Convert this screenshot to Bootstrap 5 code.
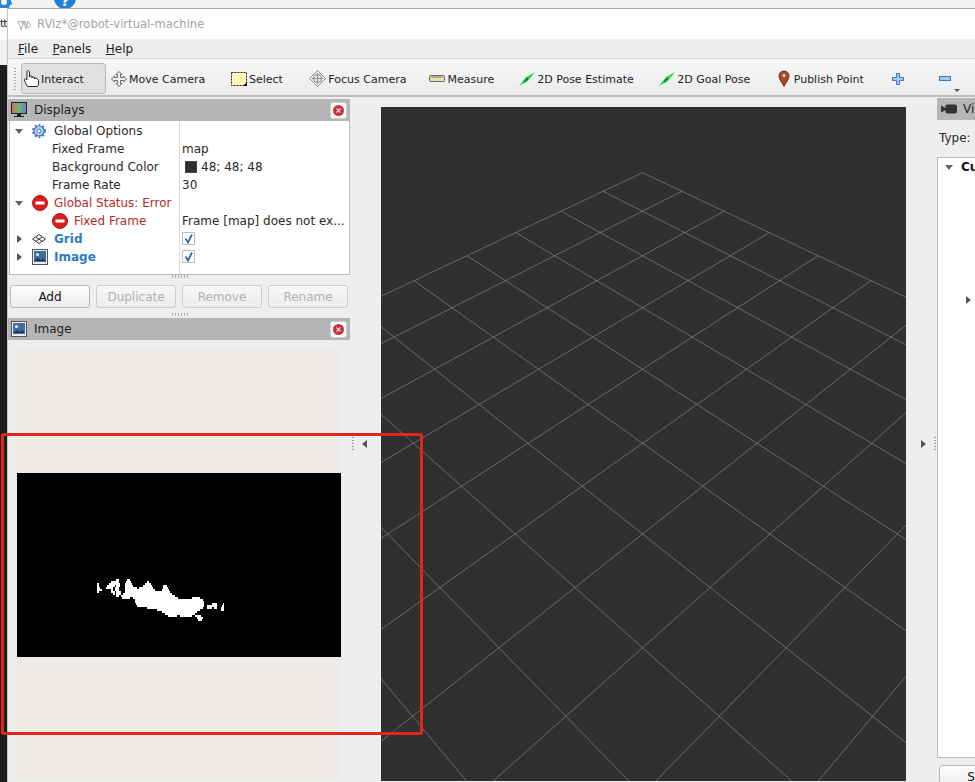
<!DOCTYPE html>
<html lang="en">
<head>
    <meta charset="UTF-8">
    <meta name="viewport" content="width=device-width, initial-scale=1.0">
    <title>RViz</title>
    <link href="https://cdn.jsdelivr.net/npm/bootstrap@5.3.0/dist/css/bootstrap.min.css" rel="stylesheet">
    <style>
        html, body { height: 782px; overflow: hidden; }
        body { font-family: "DejaVu Sans", sans-serif; font-size: 12px; color: #2a2a2a; background: #f2f2f2; }
        svg { display: block; flex: none; }

        .desk-top { height: 8px; width: 975px; }
        .desk-top svg { overflow: visible; position: relative; z-index: 0; }
        .desk-left { width: 7px; flex: none; overflow: hidden; position: relative; z-index: 2; }
        .desk-text { height: 32px; background: #fafafa; font-size: 11px; line-height: 32px; color: #222; white-space: nowrap; letter-spacing: -1px; }
        .desk-gap { height: 25px; background: #efefef; }
        .desk-dark { flex: 1; background: #1e1e1e; }

        .app-window { width: 1240px; flex: none; border-left: 1px solid #c4c4c4; border-top: 1px solid #a8a8a8; background: #eeeeee; position: relative; z-index: 1; }
        .title-bar { height: 30px; padding: 1px 0 0 9px; background: #fff; color: #a4a4a4; font-size: 11.6px; gap: 4px; }
        .menu-bar { height: 20px; gap: 14.5px; padding-left: 10px; color: #222; font-size: 12px; border-bottom: 1px solid #d9d9d9; }
        .tool-bar { height: 38px; padding: 3px 0 0 6px; font-size: 11px; color: #222; background: linear-gradient(#f7f7f7, #ececec); border-bottom: 2px solid #bdbdbd; }
        .grip { width: 2px; height: 24px; margin-right: 5px; background-image: radial-gradient(#aaa 40%, transparent 45%); background-size: 2px 3px; }
        .tool { gap: 2px; padding: 0 12.75px; white-space: nowrap; height: 31px; }
        .tool-label { padding-top: 3px; }
        .tool-on { width: 85px; padding: 0 2px; gap: 1px; background: #e0e0e0; border: 1px solid #b8b8b8; border-radius: 3px; }
        .tool-next { padding-left: 5px; padding-right: 13px; }
        .tool-focus { margin-left: 1px; }
        .tool-measure { margin-left: -2.5px; }
        .tool-pose { margin-left: -.5px; }
        .tool-pin { margin-left: 2px; padding-right: 15px; }
        .tool-last { margin-left: 10px; }
        .pin-ico { margin-right: 2px; }
        .drop-mark { width: 0; height: 0; border: 3px solid transparent; border-top: 3px solid #555; align-self: flex-end; margin: 0 0 -1px 1px; }

        .work { height: 685px; }
        .dock { width: 342px; flex: none; padding-top: 2px; }
        .dock-title { height: 22px; background: #b5b5b5; padding: 0 3px; gap: 7px; font-size: 12px; color: #222; }
        .dock-title-low { margin-top: 2px; }
        .close-btn { width: 17px; height: 17px; background: #fbfbfb; border: 1px solid #cfcfcf; border-radius: 3px; margin-left: auto; padding: 0; }
        .tree-box { height: 154px; padding-top: 1px; background: #fff linear-gradient(#d9d9d9, #d9d9d9) 169px 0 / 1px 100% no-repeat; border: 1px solid #bcbcbc; border-top: 0; margin-left: 1px; }
        .tree-row { height: 18px; line-height: 18px; white-space: nowrap; }
        .tree-name { width: 170px; flex: none; }
        .tree-sub { padding-left: 42px; }
        .tree-val { padding-left: 2px; gap: 4px; }
        .tree-val-up { margin-top: -1px; }
        .twisty { width: 22px; flex: none; padding-left: 5px; }
        .twisty .arrow-r { margin-left: 2px; }
        .tree-ico { width: 22px; flex: none; }
        .tree-err { color: #b42a2a; }
        .tree-link { color: #2f7abf; font-weight: 700; }
        .swatch { width: 12px; height: 12px; background: #303030; border: 1px solid #444; margin-left: 3px; }
        .tick-box { width: 13px; height: 13px; margin-top: -1px; background: #fff; border: 1px solid #bcbcbc; }
        .dots-h { height: 3px; width: 17px; margin: 0 auto; background-image: radial-gradient(#aaa 40%, transparent 45%); background-size: 3px 2px; }
        .act-row { height: 23px; gap: 6px; padding-left: 2px; margin: 7px 0 5px; }
        .act-btn { width: 80px; height: 23px; padding: 0; font-size: 12px; line-height: 20px; color: #111; border: 1px solid #b8b8b8; border-radius: 3px; background: linear-gradient(#fdfdfd, #ececec); }
        .act-btn:disabled { color: #b2b2b2; border-color: #cdcdcd; opacity: 1; background: linear-gradient(#f8f8f8, #ececec); }
        .image-view { height: 432px; margin: 9px 9px 0; background: #eeebe6; padding-top: 124px; }
        .split { width: 31px; flex: none; padding-top: 9px; }
        .split-dots { width: 2px; height: 16px; background-image: radial-gradient(#999 40%, transparent 45%); background-size: 2px 3px; }
        .split-dots-l { margin: 0 8px 0 2px; }
        .split-dots-r { margin-left: 8px; }
        .arrow-l { width: 0; height: 0; border: 4px solid transparent; border-right: 5px solid #555; border-left: 0; }
        .arrow-r { width: 0; height: 0; border: 4px solid transparent; border-left: 5px solid #555; border-right: 0; }
        .arrow-gap { margin-left: 15px; }
        .arrow-d { width: 0; height: 0; border: 4px solid transparent; border-top: 5px solid #666; border-bottom: 0; }
        .gl-canvas { width: 525px; height: 674px; flex: none; margin-top: 10px; background: #303030; }
        .dock-right { width: 300px; flex: none; padding-top: 1px; }
        .dock-right .dock-title { padding-left: 4px; gap: 6px; }
        .type-row { height: 36px; padding-left: 2px; }
        .view-tree { height: 601px; margin: 1px 4px 0 0; background: #fff; border: 1px solid #bcbcbc; padding: 2px 0 0 7px; }
        .view-head { font-weight: 700; color: #111; gap: 8px; height: 14px; line-height: 14px; white-space: nowrap; }
        .view-arrow { margin: 122px 0 0 21px; }
        .save-btn { margin: 7px 0 0 2px; width: 86px; }
        .mark-frame { position: absolute; left: 1px; top: 433px; width: 422px; height: 302px; border: 3px solid #de281d; border-radius: 3px; z-index: 5; pointer-events: none; }
    </style>
</head>
<body>
    <div class="desk-top">
        <svg width="975" height="8">
            <circle cx="4" cy="2" r="5" fill="none" stroke="#2c86d8" stroke-width="4"/>
            <circle cx="4" cy="2" r="7" fill="none" stroke="#2c86d8" stroke-width="2" stroke-dasharray="3 2.5"/>
            <circle cx="65" cy="-2" r="11" fill="#1f7fd6"/>
            <text x="65" y="6" text-anchor="middle" fill="#fff" font-size="14" font-weight="700" font-family="DejaVu Sans">?</text>
        </svg>
    </div>
    <div class="d-flex">
        <div class="desk-left d-flex flex-column">
            <div class="desk-text">tt</div>
            <div class="desk-gap"></div>
            <div class="desk-dark"></div>
        </div>
        <div class="app-window">
            <div class="title-bar d-flex align-items-center">
                <svg width="16" height="12" viewBox="0 0 16 12" fill="none" stroke="#b4b4b4" stroke-width="1"><path d="M1 2l3 9 3-9 2 8 2-8 3 5-3 2-3-7-4 1zM4 3l7 5"/></svg>
                <span>RViz*@robot-virtual-machine</span>
            </div>
            <div class="menu-bar d-flex align-items-center">
                <span><u>F</u>ile</span><span><u>P</u>anels</span><span><u>H</u>elp</span>
            </div>
            <div class="tool-bar d-flex align-items-center">
                <span class="grip"></span>
                <div class="tool tool-on d-flex align-items-center">
                    <svg width="16" height="17" viewBox="0 0 16 17" fill="#fff" stroke="#222" stroke-width="1"><path d="M3.500 16.500C2 14 .5 11 .5 9.500 .5 8.500 2 8.500 3 10V2c0-2 2.500-2 2.500 0v5c0-1.500 2.500-1.500 2.500 0v1c0-1.500 2.500-1.500 2.500 0v1c0-1.300 2.500-1.300 2.500 0 1.200 0 1.500 1 1.500 2v3c0 1-.5 2.500-1.500 2.500z"/></svg>
                    <span class="tool-label">Interact</span>
                </div>
                <div class="tool tool-next d-flex align-items-center">
                    <svg width="16" height="16" viewBox="0 0 16 16" fill="#eee" stroke="#666"><path d="M8 .5l3 3H9.500v3h3V5l3 3-3 3V9.500h-3v3H11l-3 3-3-3h1.500v-3h-3V11L.5 8l3-3v1.500h3v-3H5z"/></svg>
                    <span class="tool-label">Move Camera</span>
                </div>
                <div class="tool d-flex align-items-center">
                    <svg width="16" height="14" viewBox="0 0 16 14"><rect x=".5" y=".5" width="15" height="13" fill="#fdf8bc" stroke="#222" stroke-dasharray="2 1"/><path d="M12 14h4v-4z" fill="#111"/></svg>
                    <span class="tool-label">Select</span>
                </div>
                <div class="tool tool-focus d-flex align-items-center">
                    <svg width="17" height="17" viewBox="0 0 17 17" fill="none" stroke="#888"><path d="M8.500.5l8 8-8 8-8-8z" fill="#eee"/><circle cx="8.500" cy="8.500" r="4"/><path d="M8.500 3v11M3 8.500h11"/></svg>
                    <span class="tool-label">Focus Camera</span>
                </div>
                <div class="tool tool-measure d-flex align-items-center">
                    <svg width="16" height="7" viewBox="0 0 16 7"><rect x=".5" y=".5" width="15" height="6" rx="1" fill="#e9e1aa" stroke="#666"/><path d="M3 1v2M5 1v2M7 1v2M9 1v2M11 1v2M13 1v2" stroke="#777"/></svg>
                    <span class="tool-label">Measure</span>
                </div>
                <div class="tool tool-pose d-flex align-items-center">
                    <svg width="16" height="14" viewBox="0 0 16 14"><path d="M0 14L7 5 16 0 9 9z" fill="#2bdc52"/><path d="M5 10l4-4" stroke="#0d6b25" stroke-width="1.500"/></svg>
                    <span class="tool-label">2D Pose Estimate</span>
                </div>
                <div class="tool d-flex align-items-center">
                    <svg width="16" height="14" viewBox="0 0 16 14"><path d="M0 14L7 5 16 0 9 9z" fill="#2bdc52"/><path d="M5 10l4-4" stroke="#0d6b25" stroke-width="1.500"/></svg>
                    <span class="tool-label">2D Goal Pose</span>
                </div>
                <div class="tool tool-pin d-flex align-items-center">
                    <svg width="12" height="17" viewBox="0 0 12 17" class="pin-ico"><path d="M6 16.500C4 12 1 10 1 6a5 5 0 0 1 10 0c0 4-3 6-5 10.500z" fill="#a54a26" stroke="#7d3517"/><circle cx="6" cy="5.500" r="1.500" fill="#f3d9c8"/></svg>
                    <span class="tool-label">Publish Point</span>
                </div>
                <div class="tool d-flex align-items-center">
                    <svg width="12" height="12" viewBox="0 0 12 12"><path d="M4.500.5h3v4h4v3h-4v4h-3v-4h-4v-3h4z" fill="#a9c8ee" stroke="#3d76ba"/></svg>
                </div>
                <div class="tool tool-last d-flex align-items-center">
                    <svg width="12" height="5" viewBox="0 0 12 5"><rect x=".5" y=".5" width="11" height="4" fill="#a9c8ee" stroke="#3d76ba"/></svg>
                    <span class="drop-mark"></span>
                </div>
            </div>
            <div class="work d-flex">
                <div class="dock">
                    <div class="dock-title d-flex align-items-center">
                        <svg width="16" height="16" viewBox="0 0 16 16"><defs><linearGradient id="screen" x1="0" x2="1"><stop offset="0" stop-color="#d66"/><stop offset=".5" stop-color="#6b6"/><stop offset="1" stop-color="#77c"/></linearGradient></defs><rect x=".5" y=".5" width="15" height="11" fill="url(#screen)" stroke="#222"/><path d="M6 12h4v2h3v1H3v-1h3z" fill="#222"/></svg>
                        <span>Displays</span>
                        <button type="button" class="close-btn d-flex align-items-center justify-content-center" aria-label="Close">
                            <svg width="11" height="11" viewBox="0 0 11 11"><circle cx="5.500" cy="5.500" r="5.500" fill="#c9303a"/><path d="M3.500 3.500l4 4M7.500 3.500l-4 4" stroke="#f6d6d6" stroke-width="1.200"/></svg>
                        </button>
                    </div>
                    <div class="tree-box">
                        <div class="tree-row d-flex">
                            <div class="tree-name d-flex align-items-center">
                                <span class="twisty"><span class="arrow-d d-block"></span></span>
                                <span class="tree-ico"><svg width="14" height="14" viewBox="0 0 14 14"><circle cx="7" cy="7" r="5" fill="#b9d2ef" stroke="#3b78bf" stroke-width="1.200"/><circle cx="7" cy="7" r="6.200" fill="none" stroke="#3b78bf" stroke-width="1.600" stroke-dasharray="2 2"/><circle cx="7" cy="7" r="2" fill="#fff" stroke="#3b78bf"/></svg></span>
                                <span>Global Options</span>
                            </div>
                        </div>
                        <div class="tree-row d-flex">
                            <div class="tree-name tree-sub">Fixed Frame</div>
                            <div class="tree-val d-flex align-items-center">map</div>
                        </div>
                        <div class="tree-row d-flex">
                            <div class="tree-name tree-sub">Background Color</div>
                            <div class="tree-val tree-val-up d-flex align-items-center"><span class="swatch"></span><span>48; 48; 48</span></div>
                        </div>
                        <div class="tree-row d-flex">
                            <div class="tree-name tree-sub">Frame Rate</div>
                            <div class="tree-val d-flex align-items-center">30</div>
                        </div>
                        <div class="tree-row d-flex">
                            <div class="tree-name tree-err d-flex align-items-center">
                                <span class="twisty"><span class="arrow-d d-block"></span></span>
                                <span class="tree-ico"><svg width="16" height="16" viewBox="0 0 16 16"><circle cx="8" cy="8" r="7.500" fill="#d91f22" stroke="#a81416"/><rect x="3.500" y="6.500" width="9" height="3" fill="#fff"/></svg></span>
                                <span>Global Status: Error</span>
                            </div>
                        </div>
                        <div class="tree-row d-flex">
                            <div class="tree-name tree-sub tree-err d-flex align-items-center">
                                <span class="tree-ico"><svg width="16" height="16" viewBox="0 0 16 16"><circle cx="8" cy="8" r="7.500" fill="#d91f22" stroke="#a81416"/><rect x="3.500" y="6.500" width="9" height="3" fill="#fff"/></svg></span>
                                <span>Fixed Frame</span>
                            </div>
                            <div class="tree-val d-flex align-items-center">Frame [map] does not ex...</div>
                        </div>
                        <div class="tree-row d-flex">
                            <div class="tree-name tree-link d-flex align-items-center">
                                <span class="twisty"><span class="arrow-r d-block"></span></span>
                                <span class="tree-ico"><svg width="14" height="10" viewBox="0 0 14 10" fill="none" stroke="#333"><path d="M7 .5l6.500 4.500L7 9.500.5 5zM4 3l6.500 4.500M10 3L3.500 7.500"/></svg></span>
                                <span>Grid</span>
                            </div>
                            <div class="tree-val d-flex align-items-center"><span class="tick-box d-flex"><svg width="11" height="11" viewBox="0 0 11 11" fill="none" stroke="#2b6cb0" stroke-width="1.800"><path d="M2.500 5.500l2.500 4L9 1.500"/></svg></span></div>
                        </div>
                        <div class="tree-row d-flex">
                            <div class="tree-name tree-link d-flex align-items-center">
                                <span class="twisty"><span class="arrow-r d-block"></span></span>
                                <span class="tree-ico"><svg width="16" height="16" viewBox="0 0 16 16"><rect x=".5" y=".5" width="15" height="15" fill="#eee" stroke="#555"/><rect x="2" y="2" width="12" height="11" fill="#3f6f9f"/><circle cx="5.500" cy="5.500" r="1.500" fill="#e8eef5"/><path d="M2 12l4-3 3 2 2-2 3 3z" fill="#1c3a58"/></svg></span>
                                <span>Image</span>
                            </div>
                            <div class="tree-val d-flex align-items-center"><span class="tick-box d-flex"><svg width="11" height="11" viewBox="0 0 11 11" fill="none" stroke="#2b6cb0" stroke-width="1.800"><path d="M2.500 5.500l2.500 4L9 1.500"/></svg></span></div>
                        </div>
                    </div>
                    <div class="dots-h"></div>
                    <div class="act-row d-flex">
                        <button type="button" class="btn act-btn">Add</button>
                        <button type="button" class="btn act-btn" disabled>Duplicate</button>
                        <button type="button" class="btn act-btn" disabled>Remove</button>
                        <button type="button" class="btn act-btn" disabled>Rename</button>
                    </div>
                    <div class="dots-h"></div>
                    <div class="dock-title dock-title-low d-flex align-items-center">
                        <svg width="16" height="16" viewBox="0 0 16 16"><rect x=".5" y=".5" width="15" height="15" fill="#eee" stroke="#555"/><rect x="2" y="2" width="12" height="11" fill="#3f6f9f"/><circle cx="5.500" cy="5.500" r="1.500" fill="#e8eef5"/><path d="M2 12l4-3 3 2 2-2 3 3z" fill="#1c3a58"/></svg>
                        <span>Image</span>
                        <button type="button" class="close-btn d-flex align-items-center justify-content-center" aria-label="Close">
                            <svg width="11" height="11" viewBox="0 0 11 11"><circle cx="5.500" cy="5.500" r="5.500" fill="#c9303a"/><path d="M3.500 3.500l4 4M7.500 3.500l-4 4" stroke="#f6d6d6" stroke-width="1.200"/></svg>
                        </button>
                    </div>
                    <div class="image-view">
                        <svg width="324" height="184" viewBox="0 0 324 184">
                            <rect width="324" height="184" fill="#000"/>
                            <path id="blobShape" transform="translate(63 92) scale(.3333)" fill="#fff" shape-rendering="crispEdges"/>
                        </svg>
                    </div>
                </div>
                <div class="split d-flex align-items-center">
                    <span class="split-dots split-dots-l"></span>
                    <span class="arrow-l"></span>
                </div>
                <div class="gl-canvas">
                    <svg id="gridLines" width="525" height="674" viewBox="381 107 525 674"></svg>
                </div>
                <div class="split d-flex align-items-center">
                    <span class="arrow-r arrow-gap"></span>
                    <span class="split-dots split-dots-r"></span>
                </div>
                <div class="dock-right">
                    <div class="dock-title d-flex align-items-center">
                        <svg width="16" height="10" viewBox="0 0 18 10"><path d="M0 1l5 3V2a2 2 0 0 1 2-2h9a2 2 0 0 1 2 2v6a2 2 0 0 1-2 2H7a2 2 0 0 1-2-2V6L0 9z" fill="#333"/></svg>
                        <span>Views</span>
                    </div>
                    <div class="type-row d-flex align-items-center">Type:</div>
                    <div class="view-tree">
                        <div class="view-head d-flex align-items-center"><span class="arrow-d d-block"></span><span>Current View</span></div>
                        <span class="arrow-r d-block view-arrow"></span>
                    </div>
                    <button type="button" class="btn act-btn save-btn">Save</button>
                </div>
            </div>
        </div>
    </div>
    <div class="mark-frame"></div>

    <script>
        // floor grid: 10 x 10 cells through the camera's perspective
        const gridBox = document.getElementById('gridLines');

        function project(u, v) {
            const w = 1 - 0.03363 * (u + v);
            return [642.5 + 38 * (u - v) / w, (172.7 + 12.15 * (u + v)) / w];
        }

        function addLine(a, b) {
            const line = document.createElementNS('http://www.w3.org/2000/svg', 'line');
            line.setAttribute('x1', a[0]);
            line.setAttribute('y1', a[1]);
            line.setAttribute('x2', b[0]);
            line.setAttribute('y2', b[1]);
            line.setAttribute('stroke', '#a0a0a0');
            line.setAttribute('stroke-opacity', '0.5');
            gridBox.appendChild(line);
        }

        for (let i = 0; i <= 10; i++) {
            addLine(project(i, 0), project(i, 10));
            addLine(project(0, i), project(10, i));
        }

        // white mask in the image view, one row of spans every 6 units
        const blobRows = [
            [42, [108, 118], [140, 150]],
            [48, [92, 118], [138, 152], [202, 208]],
            [54, [50, 56], [86, 120], [136, 155], [196, 212]],
            [60, [50, 58], [80, 104], [108, 120], [134, 158], [188, 215], [250, 262]],
            [66, [52, 60], [78, 100], [104, 118], [134, 170], [178, 218], [248, 264]],
            [72, [50, 66], [92, 100], [104, 118], [134, 224], [246, 268]],
            [78, [52, 58], [94, 104], [108, 122], [134, 270]],
            [84, [98, 104], [108, 122], [128, 275]],
            [90, [108, 118], [122, 285]],
            [96, [126, 150], [158, 295], [335, 360]],
            [102, [165, 368]],
            [108, [165, 372]],
            [114, [168, 372], [395, 410], [428, 432]],
            [120, [172, 372], [382, 412], [426, 432]],
            [126, [200, 368], [382, 395], [402, 412], [422, 433]],
            [132, [230, 360], [422, 433]],
            [138, [245, 352]],
            [144, [255, 345]],
            [150, [265, 290], [300, 335], [345, 362]],
            [156, [350, 368]],
            [162, [355, 365]]
        ];

        let blobPath = '';
        blobRows.forEach(function(row) {
            row.slice(1).forEach(function(span) {
                blobPath += `M${span[0]} ${row[0]}H${span[1]}V${row[0] + 6}H${span[0]}z`;
            });
        });
        document.getElementById('blobShape').setAttribute('d', blobPath);
    </script>
    <script src="https://cdn.jsdelivr.net/npm/bootstrap@5.3.0/dist/js/bootstrap.bundle.min.js"></script>
</body>
</html>
